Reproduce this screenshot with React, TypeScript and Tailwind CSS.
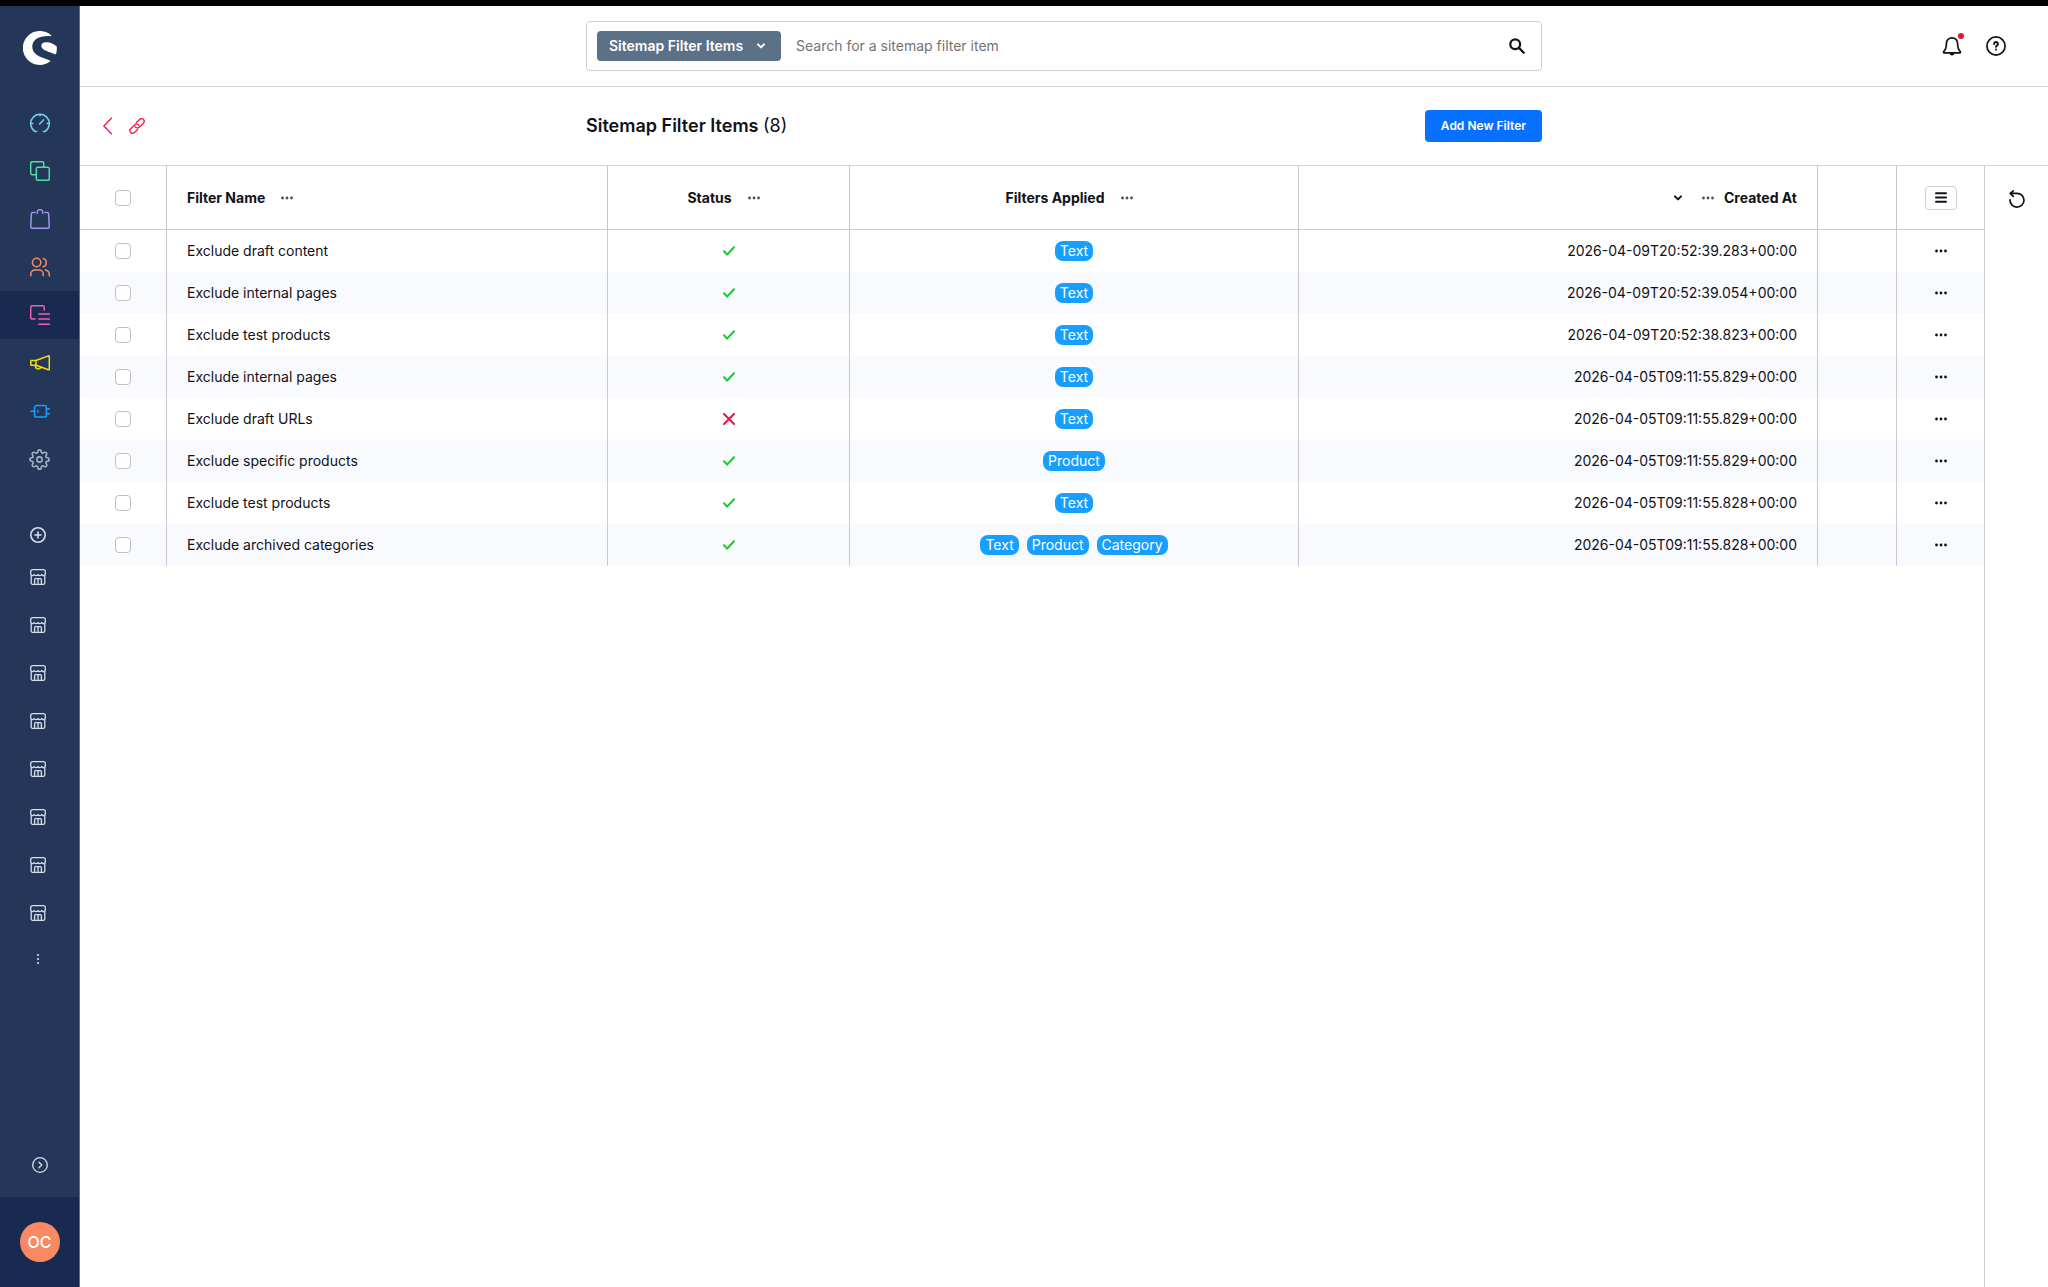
import { useState } from "react";
import type { ReactNode } from "react";
import { FiSettings } from "react-icons/fi";

interface FilterItem {
  name: string;
  active: boolean;
  filters: string[];
  createdAt: string;
}

const items: FilterItem[] = [
  { name: "Exclude draft content", active: true, filters: ["Text"], createdAt: "2026-04-09T20:52:39.283+00:00" },
  { name: "Exclude internal pages", active: true, filters: ["Text"], createdAt: "2026-04-09T20:52:39.054+00:00" },
  { name: "Exclude test products", active: true, filters: ["Text"], createdAt: "2026-04-09T20:52:38.823+00:00" },
  { name: "Exclude internal pages", active: true, filters: ["Text"], createdAt: "2026-04-05T09:11:55.829+00:00" },
  { name: "Exclude draft URLs", active: false, filters: ["Text"], createdAt: "2026-04-05T09:11:55.829+00:00" },
  { name: "Exclude specific products", active: true, filters: ["Product"], createdAt: "2026-04-05T09:11:55.829+00:00" },
  { name: "Exclude test products", active: true, filters: ["Text"], createdAt: "2026-04-05T09:11:55.828+00:00" },
  {
    name: "Exclude archived categories",
    active: true,
    filters: ["Text", "Product", "Category"],
    createdAt: "2026-04-05T09:11:55.828+00:00",
  },
];

const Icon = ({ size = 20, stroke = 1.5, children }: { size?: number; stroke?: number; children: ReactNode }) => (
  <svg
    width={size}
    height={size}
    viewBox={`0 0 ${size} ${size}`}
    fill="none"
    stroke="currentColor"
    strokeWidth={stroke}
    strokeLinecap="round"
    strokeLinejoin="round"
    aria-hidden="true"
  >
    {children}
  </svg>
);

const Logo = () => (
  <svg width="34" height="34" viewBox="0 0 34 34" fill="#fff" aria-hidden="true">
    <path d="M28.3 4.4A17 17 0 1 0 27 30.6C27.6 30.2 27.4 29.8 26.8 29.5C22 27.4 17 26.2 13.6 23.7C10.6 21.4 9.2 18.6 9.3 15.3C9.5 8.6 16.4 4.4 27.8 5.2C28.4 5.3 28.8 4.8 28.3 4.4Z" />
    <path d="M33.7 15.6C30.8 12.6 26.8 11 22.8 11.3C19.8 11.5 18.2 13 18.3 15C18.5 19.4 26.5 20.8 32.2 23.3C32.7 23.5 33 23.3 33.1 22.8C33.7 20.6 34.1 18 33.7 15.6Z" />
  </svg>
);

const Dots = () => (
  <svg width="12" height="4" viewBox="0 0 12 4" fill="currentColor" aria-hidden="true">
    <circle cx="1.5" cy="2" r="1.4" />
    <circle cx="6" cy="2" r="1.4" />
    <circle cx="10.5" cy="2" r="1.4" />
  </svg>
);

const ChevronDown = () => (
  <svg width="8" height="6" viewBox="0 0 8 6" fill="none" stroke="currentColor" strokeWidth="2" strokeLinecap="round" strokeLinejoin="round" aria-hidden="true">
    <path d="M1 1.4L4 4.4L7 1.4" />
  </svg>
);

const StoreIcon = () => (
  <Icon size={16} stroke={1.3}>
    <path d="M2.6.7h10.8a1.9 1.9 0 0 1 1.9 1.9v2.2a1.9 1.9 0 0 1-3.7.5 1.9 1.9 0 0 1-3.6.2 1.9 1.9 0 0 1-3.6-.2 1.9 1.9 0 0 1-3.7-.5V2.6A1.9 1.9 0 0 1 2.6.7Z" />
    <path d="M1.2 6.5v7.4a1.4 1.4 0 0 0 1.4 1.4h10.8a1.4 1.4 0 0 0 1.4-1.4V6.5" />
    <path d="M4.6 15.2v-4.6a1 1 0 0 1 1-1h4.8a1 1 0 0 1 1 1v4.6M8 9.8v5.4" />
  </Icon>
);

const navItems = [
  {
    label: "Dashboard",
    color: "text-[#6ed5ee]",
    icon: (
      <Icon>
        <path d="M6.6 18.4H4.9A9.3 9.3 0 1 1 15.1 18.4H13.4M10 1v1.8M1 10.4h1.8M19 10.4h-1.8M9.6 10.9l3.9-4" />
      </Icon>
    ),
  },
  {
    label: "Catalogues",
    color: "text-[#57d9a3]",
    icon: (
      <Icon>
        <path d="M6.2 13.7H2.2A1.5 1.5 0 0 1 .7 12.2V2.2A1.5 1.5 0 0 1 2.2.7h10a1.5 1.5 0 0 1 1.5 1.5v4" />
        <rect x="6.3" y="6.3" width="13" height="13" rx="1.5" />
      </Icon>
    ),
  },
  {
    label: "Orders",
    color: "text-[#a092f0]",
    icon: (
      <Icon>
        <path d="M5 3.4H2.8a1.4 1.4 0 0 0-1.4 1.3L.8 17.8a1.4 1.4 0 0 0 1.4 1.5h15.6a1.4 1.4 0 0 0 1.4-1.5l-.6-13.1a1.4 1.4 0 0 0-1.4-1.3H15" />
        <path d="M7.2 4.6V3.4a2.8 2.8 0 0 1 5.6 0v1.2" />
      </Icon>
    ),
  },
  {
    label: "Customers",
    color: "text-[#f58a60]",
    icon: (
      <Icon>
        <circle cx="6.6" cy="5.5" r="4.2" />
        <path d="M13.2 1.4a4.3 4.3 0 0 1 0 8.3M.8 18.8V17a4 4 0 0 1 4-4h4.4a4 4 0 0 1 4 4v1.8M15.4 13.1a4.6 4.6 0 0 1 3.9 4.4v1.3" />
      </Icon>
    ),
  },
  {
    label: "Content",
    color: "text-[#f061b2]",
    icon: (
      <Icon>
        <path d="M5 14.1H2.2A1.5 1.5 0 0 1 .7 12.6V2.2A1.5 1.5 0 0 1 2.2.7h10.5a1.5 1.5 0 0 1 1.5 1.5v2.9" />
        <path d="M8.9 8.9h10.4M8.9 14.1h10.4M8.9 19.2h10.4" />
      </Icon>
    ),
  },
  {
    label: "Marketing",
    color: "text-[#f9de0c]",
    icon: (
      <Icon>
        <path d="M6 7.5H1.3a.5.5 0 0 0-.5.5v3.8a.5.5 0 0 0 .5.5H6ZM6 7.5L18.4 2.9a.7.7 0 0 1 .9.6v12.6a.7.7 0 0 1-.9.6L6 12.3M5.6 12.5a2.7 2.7 0 1 0 5.3 1.5" />
      </Icon>
    ),
  },
  {
    label: "Extensions",
    color: "text-[#189eff]",
    icon: (
      <Icon>
        <path d="M.8 10.2h3.7M16.4 7.8h2.9M16.4 12.8h2.9M7.8 9.6v1.3" />
        <path d="M6.6 4.5h7.9a1.9 1.9 0 0 1 1.900 1.900v7.800a1.900 1.900 0 0 1-1.900 1.900H6.600a2.100 2.100 0 0 1-2.100-2.100V6.600a2.100 2.100 0 0 1 2.100-2.100Z" />
      </Icon>
    ),
  },
  { label: "Settings", color: "text-[#a6b3c7]", icon: <FiSettings size={21} strokeWidth={1.8} /> },
];

const stores = ["Storefront 1", "Storefront 2", "Storefront 3", "Storefront 4", "Storefront 5", "Storefront 6", "Storefront 7", "Storefront 8"];

const Sidebar = () => (
  <aside className="flex w-20 shrink-0 flex-col border-r border-[#5f6d87] bg-[#243758]">
    <div className="flex h-[93px] justify-center pt-[25px]">
      <Logo />
    </div>
    <nav className="flex flex-col">
      {navItems.map((item) => (
        <a
          key={item.label}
          href="#"
          aria-label={item.label}
          className={`flex h-12 items-center justify-center ${item.color} ${item.label === "Content" ? "bg-[#182a50]" : ""}`}
        >
          {item.icon}
        </a>
      ))}
    </nav>
    <div className="mt-[34px] flex flex-col items-center pr-1 text-[#d5deed]">
      <button aria-label="Add sales channel" className="flex h-9 items-center">
        <Icon size={16} stroke={1.6}>
          <circle cx="8" cy="8" r="7.2" />
          <path d="M8 5v6M5 8h6" />
        </Icon>
      </button>
      {stores.map((store) => (
        <a key={store} href="#" aria-label={store} className="flex h-12 items-center">
          <StoreIcon />
        </a>
      ))}
      <button aria-label="More sales channels" className="flex h-11 items-center">
        <svg width="4" height="12" viewBox="0 0 4 12" fill="currentColor" aria-hidden="true">
          <circle cx="2" cy="2" r="1.1" />
          <circle cx="2" cy="6" r="1.1" />
          <circle cx="2" cy="10" r="1.1" />
        </svg>
      </button>
    </div>
    <button aria-label="Expand menu" className="mt-auto flex h-16 items-center justify-center text-[#d5deed]">
      <Icon size={16} stroke={1.3}>
        <circle cx="8" cy="8" r="7.3" />
        <path d="M7 5.2L9.800 8L7 10.800" />
      </Icon>
    </button>
    <div className="flex h-[90px] items-center justify-center bg-[#182a50]">
      <button aria-label="User menu" className="size-10 rounded-full bg-[#f88962] text-base font-medium text-white">
        OC
      </button>
    </div>
  </aside>
);

const SearchBar = () => (
  <header className="grid h-[81px] grid-cols-[1fr_minmax(0,956px)_1fr] items-center border-b border-[#d5d4de]">
    <div className="col-start-2 flex h-[50px] items-center rounded border border-[#cfced8] px-[10px]">
      <button className="flex h-[30px] w-[184px] shrink-0 items-center justify-between rounded bg-[#5b7187] pr-4 pl-3 text-sm font-semibold text-white">
        Sitemap Filter Items
        <ChevronDown />
      </button>
      <input
        type="text"
        aria-label="Search"
        placeholder="Search for a sitemap filter item"
        className="min-w-0 flex-1 bg-transparent px-[15px] text-sm text-[#111118] outline-none placeholder:text-[#737375]"
      />
      <button aria-label="Start search" className="px-[6px]">
        <Icon size={16} stroke={2.2}>
          <circle cx="6.2" cy="6.2" r="4.9" />
          <path d="M9.900 9.900L14.800 14.800" />
        </Icon>
      </button>
    </div>
    <div className="flex items-center justify-end gap-6 pr-[42px]">
      <button aria-label="Notifications" className="relative">
        <Icon stroke={1.7}>
          <path d="M10 1.800a5.600 5.600 0 0 0-5.600 5.600c0 4.600-.9 6.300-2.600 8-.6.6-.2 1.500.6 1.500h15.200c.8 0 1.200-.9.6-1.500-1.700-1.700-2.600-3.400-2.600-8A5.600 5.600 0 0 0 10 1.800ZM8.300 17.400a1.800 1.800 0 0 0 3.400 0" />
        </Icon>
        <span className="absolute -top-[3px] -right-[2px] size-[6px] rounded-full bg-[#e5141f]" />
      </button>
      <button aria-label="Help">
        <Icon stroke={1.7}>
          <circle cx="10" cy="10" r="9.1" />
          <path strokeWidth="2" d="M8.100 7.900a1.900 1.900 0 1 1 2.800 1.700c-.6.4-.9.700-.9 1.100" />
          <circle cx="10" cy="13.600" r=".4" strokeWidth="1.400" />
        </Icon>
      </button>
    </div>
  </header>
);

const PageBar = () => (
  <div className="grid h-[79px] grid-cols-[1fr_minmax(0,956px)_1fr] items-center border-b border-[#d5d4de]">
    <div className="flex items-center gap-4 pl-[23px] text-[#f5234b]">
      <a href="#" aria-label="Back">
        <svg width="10" height="18" viewBox="0 0 10 18" fill="none" stroke="currentColor" strokeWidth="1.5" strokeLinecap="round" strokeLinejoin="round" aria-hidden="true">
          <path d="M8.400 1.200L.9 9l7.500 7.800" />
        </svg>
      </a>
      <a href="#" aria-label="Copy link">
        <Icon size={16} stroke={1.4}>
          <path d="M6 8.700a2.900 2.900 0 0 0 4.400.4l3.900-3.900a2.650 2.650 0 0 0-3.700-3.800L7.400 4.600" />
          <path d="M10 7.300a2.900 2.900 0 0 0-4.400-.4l-3.900 3.900a2.650 2.650 0 0 0 3.700 3.800L8.600 11.400" />
        </Icon>
      </a>
    </div>
    <div className="flex items-center justify-between">
      <h1 className="text-lg font-semibold">
        Sitemap Filter Items <span className="font-normal">(8)</span>
      </h1>
      <button className="h-8 rounded bg-[#0870ff] px-4 text-xs font-semibold text-white">Add New Filter</button>
    </div>
  </div>
);

const CheckBox = ({ label, checked, onChange }: { label: string; checked: boolean; onChange: () => void }) => (
  <input
    type="checkbox"
    aria-label={label}
    checked={checked}
    onChange={onChange}
    className="mx-auto block size-4 appearance-none rounded border border-[#bfbecb] bg-white checked:bg-[#0870ff]"
  />
);

const ColumnMenu = ({ label }: { label: string }) => (
  <button aria-label={`${label} options`} className="flex h-6 items-center text-[#4d4d56]">
    <Dots />
  </button>
);

const FilterTable = () => {
  const [selected, setSelected] = useState<number[]>([]);

  const toggle = (index: number) => {
    setSelected((prev) => (prev.includes(index) ? prev.filter((i) => i !== index) : [...prev, index]));
  };

  const toggleAll = () => {
    setSelected(selected.length === items.length ? [] : items.map((_, i) => i));
  };

  const cell = "border-r border-[#cbcad4]";

  return (
    <table className="w-full table-fixed border-separate border-spacing-0 text-sm">
      <colgroup>
        <col className="w-[87px]" />
        <col className="w-[441px]" />
        <col className="w-[242px]" />
        <col className="w-[449px]" />
        <col />
        <col className="w-[79px]" />
        <col className="w-[87px]" />
      </colgroup>
      <thead>
        <tr className="h-16 *:border-b *:border-[#c9c8d2]">
          <th className={cell}>
            <CheckBox label="Select all" checked={selected.length === items.length} onChange={toggleAll} />
          </th>
          <th className={`${cell} px-5`}>
            <div className="flex items-center gap-4">
              Filter Name
              <ColumnMenu label="Filter Name" />
            </div>
          </th>
          <th className={cell}>
            <div className="flex items-center justify-center gap-4 pr-[10px]">
              Status
              <ColumnMenu label="Status" />
            </div>
          </th>
          <th className={cell}>
            <div className="flex items-center justify-center gap-4 pr-[10px]">
              Filters Applied
              <ColumnMenu label="Filters Applied" />
            </div>
          </th>
          <th className={`${cell} px-5`}>
            <div className="flex items-center justify-end">
              <ChevronDown />
              <div className="ml-5 flex items-center gap-[10px]">
                <ColumnMenu label="Created At" />
                Created At
              </div>
            </div>
          </th>
          <th className={cell} />
          <th>
            <button aria-label="Table settings" className="mx-auto flex h-6 w-8 items-center justify-center rounded border border-[#cfced8]">
              <svg width="12" height="11" viewBox="0 0 12 11" stroke="currentColor" strokeWidth="2" strokeLinecap="round" aria-hidden="true">
                <path d="M1 1.200h10M1 5.500h10M1 9.800h10" />
              </svg>
            </button>
          </th>
        </tr>
      </thead>
      <tbody>
        {items.map((item, index) => (
          <tr key={index} className="h-[42px] even:bg-[#f9fafe]">
            <td className={cell}>
              <CheckBox label={`Select ${item.name}`} checked={selected.includes(index)} onChange={() => toggle(index)} />
            </td>
            <td className={`${cell} px-5`}>{item.name}</td>
            <td className={cell}>
              {item.active ? (
                <svg className="mx-auto text-[#14c92e]" width="12" height="10" viewBox="0 0 12 10" fill="none" stroke="currentColor" strokeWidth="2" strokeLinecap="round" strokeLinejoin="round" role="img" aria-label="Active">
                  <path d="M1 5.300L4.100 8.600L11 1.200" />
                </svg>
              ) : (
                <svg className="mx-auto text-[#de1a45]" width="12" height="12" viewBox="0 0 12 12" fill="none" stroke="currentColor" strokeWidth="2" strokeLinecap="round" role="img" aria-label="Inactive">
                  <path d="M1 1l10 10M11 1L1 11" />
                </svg>
              )}
            </td>
            <td className={cell}>
              <div className="flex justify-center gap-2">
                {item.filters.map((filter) => (
                  <span key={filter} className="rounded-lg bg-[#189eff] px-[5px] leading-5 text-white">
                    {filter}
                  </span>
                ))}
              </div>
            </td>
            <td className={`${cell} px-5 text-right`}>{item.createdAt}</td>
            <td className={cell} />
            <td>
              <button aria-label={`Actions for ${item.name}`} className="mx-auto flex h-6 items-center">
                <Dots />
              </button>
            </td>
          </tr>
        ))}
      </tbody>
    </table>
  );
};

export default function App() {
  return (
    <div className="flex min-h-screen flex-col bg-white font-['Inter',sans-serif] text-[#111118]">
      <div className="h-[6px] bg-black" />
      <div className="flex flex-1">
        <Sidebar />
        <main className="flex min-w-0 flex-1 flex-col">
          <SearchBar />
          <PageBar />
          <div className="flex flex-1">
            <div className="min-w-0 flex-1">
              <FilterTable />
            </div>
            <div className="flex w-16 shrink-0 items-start justify-center border-l border-[#cfced8] pt-6">
              <button aria-label="Refresh">
                <Icon size={18} stroke={1.7}>
                  <path d="M2 9.800a7 6.900 0 1 0 7-6.500H2.200M5.200.9L2.200 3.300L5.200 6.300" />
                </Icon>
              </button>
            </div>
          </div>
        </main>
      </div>
    </div>
  );
}
